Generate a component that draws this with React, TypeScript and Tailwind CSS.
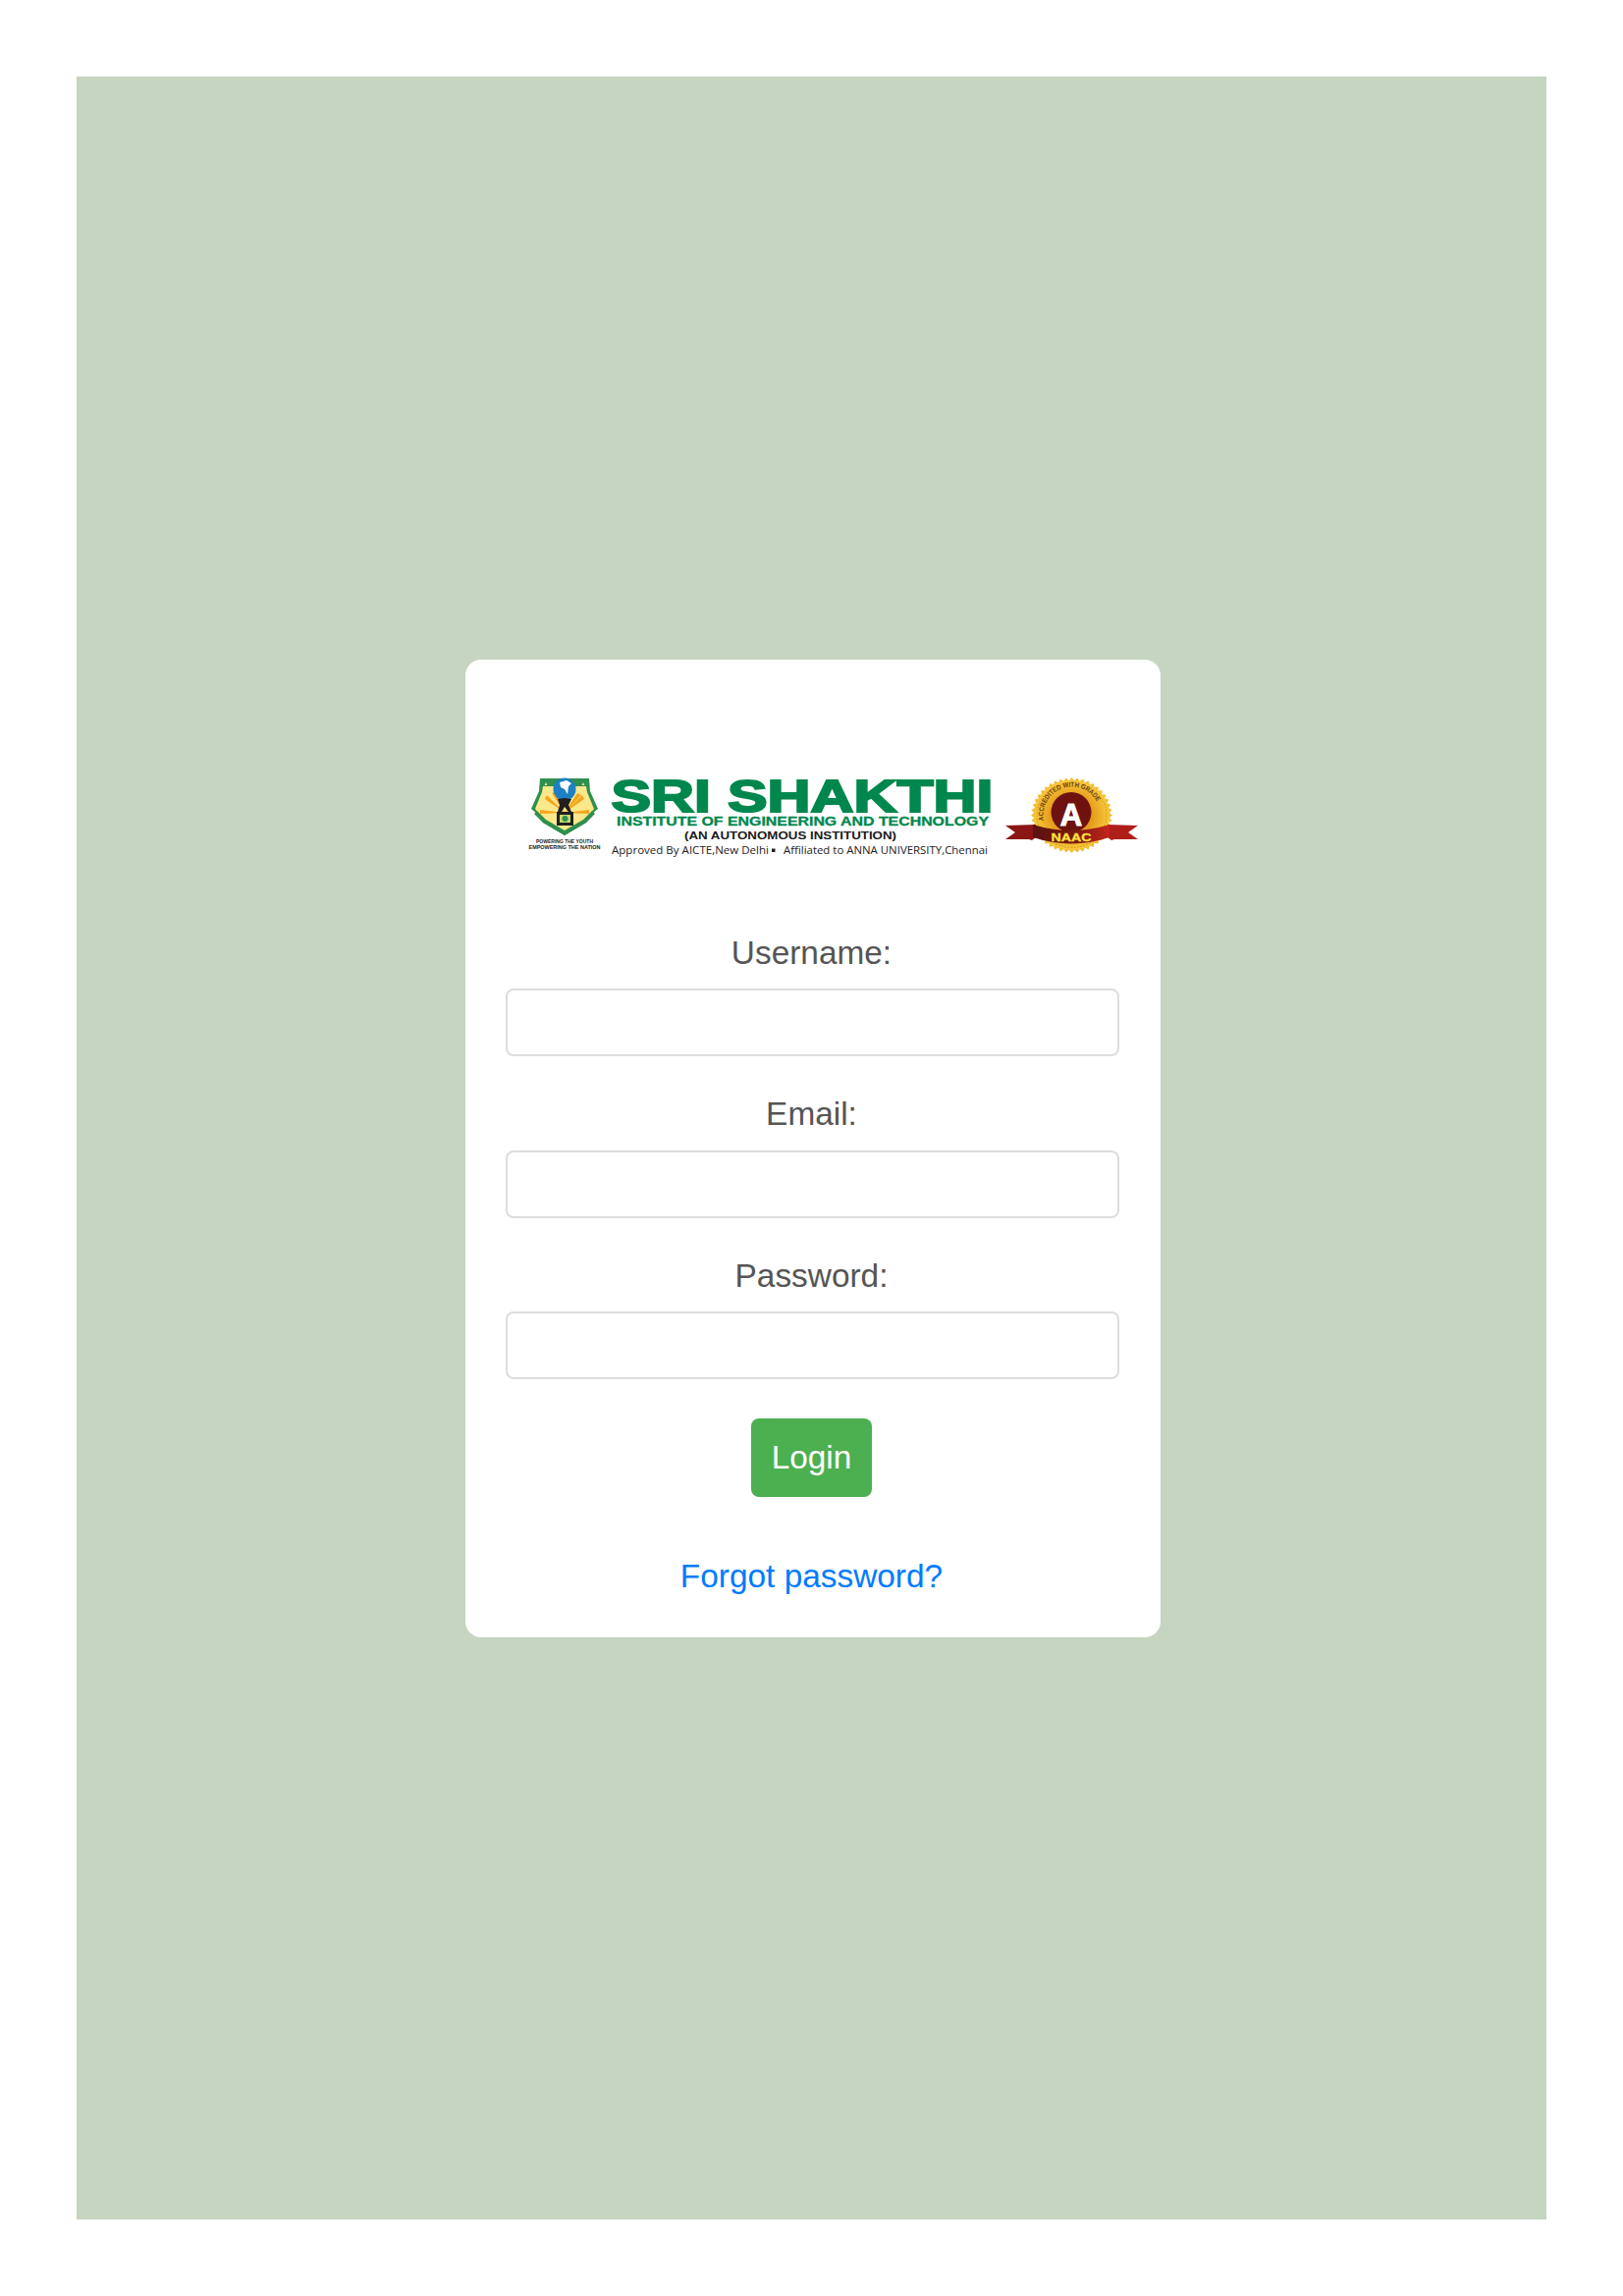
const teeth = Array.from({ length: 44 }, (_, i) => (i * 360) / 44);

function Logo() {
  return (
    <svg viewBox="474 780 708 100" className="block w-[708px] h-[100px]" fontFamily="'Liberation Sans', Arial, sans-serif">
      <defs>
        <linearGradient id="band" x1="0" x2="1" y1="0" y2="0">
          <stop offset="0" stopColor="#5a1210" />
          <stop offset="0.55" stopColor="#7c1712" />
          <stop offset="1" stopColor="#c4261c" />
        </linearGradient>
        <radialGradient id="gold">
          <stop offset="0.55" stopColor="#e59a1c" />
          <stop offset="1" stopColor="#f7c93a" />
        </radialGradient>
      </defs>

      {/* crest */}
      <path d="M550 793h50l1 13 8 18-6 5-6 9-22 13-22-13-6-9-6-5 8-18z" fill="#2f8f4e" />
      <path d="M553 801h44l1 6 7 17-9 11-21 13-21-13-9-11 7-17z" fill="#fbe88a" />
      <path d="M575 828l-20-14 2-4zM575 828l-13-20 4-2zM575 828l13-20 4 2zM575 828l18-18 2 4zM575 828l-25 1 0-4zM575 828l25 1 0-4z" fill="#f3a51c" />
      <path d="M547 826l-3 3 9 9 22 13 22-13 9-9-3-3-9 9-19 11-19-11z" fill="#2f8f4e" />
      <path d="M556 797l1.500 3h-3zM594 797l1.500 3h-3z" fill="#d9e8a0" />
      <circle cx="575" cy="804" r="11.500" fill="#1d7fc4" />
      <path d="M570 797l7-2 5 3-3 3-1 8-3-5-4-2z" fill="#fff" />
      <path d="M568 814l7-1 7 1-3 6 3 7h-3l-4-5-3 5h-4l2-7z" fill="#1f1f1f" />
      <rect x="567" y="827" width="17" height="14" fill="#1f1f1f" />
      <rect x="570" y="830" width="11" height="8" fill="#c9d86a" />
      <circle cx="575.500" cy="834" r="3" fill="#2f8f4e" />
      <text x="575" y="858.500" textAnchor="middle" fontSize="5" fontWeight="700" textLength="58" lengthAdjust="spacingAndGlyphs" fill="#222">POWERING THE YOUTH</text>
      <text x="575" y="864.500" textAnchor="middle" fontSize="5" fontWeight="700" textLength="73" lengthAdjust="spacingAndGlyphs" fill="#222">EMPOWERING THE NATION</text>

      {/* name */}
      <text x="622.500" y="826.500" fontSize="46" fontWeight="700" textLength="389" lengthAdjust="spacingAndGlyphs" fill="#00874d" stroke="#00874d" strokeWidth="2">SRI SHAKTHI</text>
      <text x="628" y="841" fontSize="12.500" fontWeight="700" textLength="379" lengthAdjust="spacingAndGlyphs" fill="#00874d" stroke="#00874d" strokeWidth="0.3">INSTITUTE OF ENGINEERING AND TECHNOLOGY</text>
      <text x="697" y="854.500" fontSize="11.500" fontWeight="700" textLength="216" lengthAdjust="spacingAndGlyphs" fill="#1a1a1a">(AN AUTONOMOUS INSTITUTION)</text>
      <text x="623" y="870" fontSize="11.500" textLength="160" lengthAdjust="spacingAndGlyphs" fontFamily="'Open Sans', sans-serif" fill="#222">Approved By AICTE,New Delhi</text>
      <rect x="786" y="864.500" width="3.500" height="3.500" fill="#222" />
      <text x="798" y="870" fontSize="11.500" textLength="208" lengthAdjust="spacingAndGlyphs" fontFamily="'Open Sans', sans-serif" fill="#222">Affiliated to ANNA UNIVERSITY,Chennai</text>

      {/* naac seal */}
      <g transform="translate(1091.500 830.500) scale(1.08 1)">
        {teeth.map((a) => (
          <polygon key={a} points="-3.200,-34.500 0,-38.500 3.200,-34.500" transform={`rotate(${a})`} fill="#f2bd30" />
        ))}
        <circle r="35" fill="url(#gold)" />
        <circle r="33" fill="none" stroke="#c9820f" strokeWidth="0.7" strokeDasharray="1.500 1.500" />
      </g>
      <path id="seal-arc" d="M1063 836a29 29 0 1 1 57 0" fill="none" />
      <text fontSize="7" fontWeight="700" fill="#6b3d10">
        <textPath href="#seal-arc" textLength="82" lengthAdjust="spacingAndGlyphs">ACCREDITED WITH GRADE</textPath>
      </text>
      <circle cx="1091" cy="827.500" r="20.500" fill="#6e1210" />
      <text x="1091" y="840.500" textAnchor="middle" fontSize="31" fontWeight="700" fill="#fff" stroke="#fff" strokeWidth="1">A</text>
      <path d="M1024 841l31-1v13l-4 3-3-1-24 0 10-7z" fill="#8c1616" />
      <path d="M1159 841l-31-1v13l4 3 3-1 24 0-10-7z" fill="#b01e1a" />
      <path d="M1052 840q39 12 78 0v13q-39 13-78 0z" fill="url(#band)" />
      <text x="1091" y="856.500" textAnchor="middle" fontSize="11.500" fontWeight="700" textLength="41" lengthAdjust="spacingAndGlyphs" fill="#ffe33a" stroke="#ffe33a" strokeWidth="0.3">NAAC</text>
    </svg>
  );
}

function Field({ label, type }: { label: string; type: string }) {
  return (
    <div className="mb-[40px]">
      <label className="block pr-[2px] text-center text-[33.4px] leading-[38px] mb-[17.5px] text-[#555]">{label}</label>
      <input type={type} className="block w-full h-[69px] bg-white border-2 border-[#ddd] rounded-lg outline-none" />
    </div>
  );
}

export default function App() {
  return (
    <div className="h-[2339px] bg-white p-[78px] font-['Liberation_Sans',Arial,sans-serif]">
      <div className="h-full bg-[#c5d5c0] flex items-center justify-center">
        <div className="ml-[3px] w-[708px] h-[996px] bg-white rounded-2xl pt-[108px]">
          <Logo />
          <form className="pl-[41px] pr-[42px] mt-[72px]">
            <Field label="Username:" type="text" />
            <Field label="Email:" type="email" />
            <Field label="Password:" type="password" />
            <button type="button" className="block mr-auto ml-[250px] w-[123px] h-[80px] bg-[#4caf50] text-white text-[33.4px] rounded-lg">Login</button>
          </form>
          <div className="mt-[60.5px] pr-[3px] text-center">
            <a href="#" className="text-[33.4px] leading-[40px] text-[#007bff]">Forgot password?</a>
          </div>
        </div>
      </div>
    </div>
  );
}
